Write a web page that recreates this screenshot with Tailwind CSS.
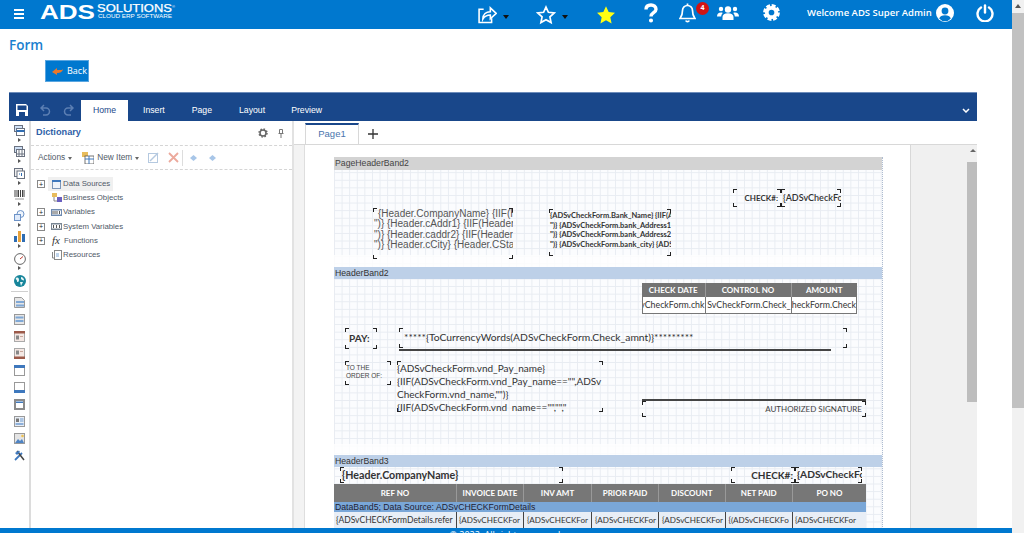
<!DOCTYPE html>
<html lang="en">
<head>
<meta charset="utf-8">
<title>Form</title>
<script src="https://cdn.jsdelivr.net/npm/@tailwindcss/browser@4"></script>
</head>
<body class="bg-white">
<div class="relative flex h-[533px] w-[1024px] overflow-hidden font-['Open_Sans',sans-serif]">
  <div class="flex w-[1012px] flex-col">
    <!-- top bar -->
    <header class="relative flex h-[29px] shrink-0 items-center bg-[#0078cf] text-white">
      <svg class="ml-[14px] h-[11px] w-[11px]" viewBox="0 0 11 11" fill="#fff"><rect y="0" width="10" height="2"/><rect y="4" width="10" height="2"/><rect y="8" width="10" height="2"/></svg>
      <svg class="ml-[15px] mb-[6px] h-[20px] w-[136px]" viewBox="0 0 136 20" fill="#fff">
        <text x="0" y="16.5" font-family="Liberation Sans" font-weight="700" font-size="21" textLength="55" lengthAdjust="spacingAndGlyphs">ADS</text>
        <text x="57" y="10" font-family="Liberation Sans" font-size="11" stroke="#fff" stroke-width=".25" textLength="75" lengthAdjust="spacingAndGlyphs">SOLUTIONS</text>
        <text x="58" y="16" font-family="Liberation Sans" font-size="5.5" textLength="74" lengthAdjust="spacingAndGlyphs">CLOUD ERP SOFTWARE</text>
        <text x="132" y="6" font-family="Liberation Sans" font-size="4">®</text>
      </svg>
      <div class="ml-[301px] flex items-center">
        <svg class="h-[20px] w-[20px]" viewBox="0 0 24 24" fill="none" stroke="#fff" stroke-width="1.9"><path d="M8 5H2.500v16h15v-5"/><path d="M7 17c0-6 4-9 9-9V3.500l7 6.500-7 6.500V12c-4 0-7 1.500-9 5z"/></svg>
        <span class="ml-[6px] mt-[5px] h-0 w-0 border-x-[3px] border-t-[4px] border-x-transparent border-t-[#111]"></span>
        <svg class="ml-[27px] h-[20px] w-[20px]" viewBox="0 0 24 24" fill="none" stroke="#fff" stroke-width="2"><path d="M12 2.500l2.900 6.300 6.900.8-5.100 4.700 1.400 6.800-6.100-3.400-6.100 3.400 1.400-6.800-5.100-4.700 6.900-.8z"/></svg>
        <span class="ml-[6px] mt-[5px] h-0 w-0 border-x-[3px] border-t-[4px] border-x-transparent border-t-[#111]"></span>
        <svg class="ml-[28px] h-[20px] w-[20px]" viewBox="0 0 24 24" fill="#ffff14"><path d="M12 1.500l3.200 7 7.600.9-5.600 5.200 1.500 7.500-6.700-3.800-6.700 3.800 1.500-7.500L1.200 9.400l7.600-.9z"/></svg>
        <svg class="ml-[28px] mb-[4px] h-[20px] w-[14px]" viewBox="0 0 14 20" fill="none" stroke="#fff" stroke-width="3.400"><path d="M2 6.500C2 3.500 4.200 2 7 2s5 1.600 5 4.200c0 3.600-5 3.400-5 7.300"/><circle cx="7" cy="17.500" r="1.300" fill="#fff" stroke-width="1.500"/></svg>
        <svg class="ml-[21px] mb-[4px] h-[20px] w-[17px]" viewBox="0 0 17 20" fill="none" stroke="#fff" stroke-width="1.700"><path d="M8.500 2.500A5 5 0 0 0 3.500 7.500c0 5-1.500 6.500-2.500 8h15c-1-1.500-2.500-3-2.500-8a5 5 0 0 0-5-5z"/><path d="M8.500 .5v2M6.800 17.500a1.800 1.800 0 0 0 3.400 0" /></svg>
        <span class="mb-[13px] flex h-[13px] w-[13px] items-center justify-center rounded-full bg-[#d11414] text-[7px] font-bold">4</span>
        <svg class="ml-[8px] mb-[3px] h-[18px] w-[22px]" viewBox="0 0 22 18" fill="#fff"><circle cx="11" cy="5.500" r="3.200"/><circle cx="4" cy="5" r="2.200"/><circle cx="18" cy="5" r="2.200"/><path d="M5.500 16v-3c0-2.400 2-3.800 5.500-3.800s5.500 1.400 5.500 3.800v3z"/><path d="M0 12.500C0 10 1.500 8.500 4 8.500c.7 0 1.300.1 1.800.4C4.700 10 4.200 11.200 4.200 12.500z"/><path d="M22 12.500C22 10 20.500 8.500 18 8.500c-.7 0-1.300.1-1.800.4 1.100 1.100 1.600 2.300 1.600 3.600z"/></svg>
        <svg class="ml-[24px] mb-[4px] h-[17px] w-[17px]" viewBox="0 0 18 18"><circle cx="9" cy="9" r="5" fill="none" stroke="#fff" stroke-width="4"/><circle cx="9" cy="9" r="7.200" fill="none" stroke="#fff" stroke-width="3.400" stroke-dasharray="4 1.650"/></svg>
      </div>
      <span class="ml-[27px] mb-[3px] w-[127px] whitespace-nowrap text-[9.500px] font-semibold">Welcome ADS Super Admin</span>
      <svg class="ml-[2px] mb-[3px] h-[18px] w-[18px]" viewBox="0 0 18 18"><circle cx="9" cy="9" r="9" fill="#fff"/><circle cx="9" cy="7" r="3.400" fill="#0078cf"/><path d="M3.200 14.500C4 12 6 11.300 9 11.300s5 .7 5.800 3.200A7.500 7.500 0 0 1 3.200 14.500z" fill="#0078cf"/></svg>
      <svg class="ml-[22px] mb-[4px] h-[18px] w-[18px]" viewBox="0 0 18 18" fill="none" stroke="#fff" stroke-width="2.400" stroke-linecap="round"><path d="M5 3.500a7.500 7.500 0 1 0 8 0"/><path d="M9 1.500v7"/></svg>
    </header>

    <!-- page head -->
    <div class="h-[63px] shrink-0 pl-[9px] pt-[8px]">
      <h1 class="text-[13.500px] font-semibold leading-[17px] text-[#1a80cf]">Form</h1>
      <button class="ml-[36px] mt-[6px] flex h-[22px] w-[44px] items-center gap-[4px] border border-[#5aa6e0] bg-[#0078cf] pl-[6px] text-[9px] text-white">
        <svg class="h-[9px] w-[11px]" viewBox="0 0 11 9"><path d="M0 5l5-4v2c3 0 5 .5 6-1-.5 3-3 4-6 4v2z" fill="#e8782a"/></svg>Back
      </button>
    </div>

    <!-- designer -->
    <div class="ml-[9px] flex w-[968px] flex-1 flex-col font-['Liberation_Sans',sans-serif]">
      <div class="flex h-[29px] shrink-0 items-end border-t border-[#6d8cba] bg-[#19478a] text-[8.700px] text-white">
        <div class="flex h-[28px] items-center pl-[7px]">
          <svg class="mt-[5px] h-[12px] w-[12px]" viewBox="0 0 12 12"><path d="M0 0h10l2 2v10H0z" fill="#fff"/><rect x="1.500" y="1.500" width="9" height="4.500" fill="#19478a"/><rect x="3" y="8" width="6" height="4" fill="#19478a"/></svg>
          <svg class="ml-[12px] mt-[5px] h-[12px] w-[11px]" viewBox="0 0 11 12" fill="none" stroke="#5c7fb3" stroke-width="1.500"><path d="M4 1L1 4l3 3M1 4h5a3.500 3.500 0 0 1 0 7H3"/></svg>
          <svg class="ml-[12px] mt-[5px] h-[12px] w-[11px]" viewBox="0 0 11 12" fill="none" stroke="#5c7fb3" stroke-width="1.500"><path d="M7 1l3 3-3 3M10 4H5a3.500 3.500 0 0 0 0 7h3"/></svg>
        </div>
        <div class="ml-[7px] flex h-[21px] w-[47px] items-center justify-center bg-white text-[#19478a]">Home</div>
        <div class="flex h-[21px] items-center">
          <span class="ml-[15px]">Insert</span>
          <span class="ml-[27px]">Page</span>
          <span class="ml-[27px]">Layout</span>
          <span class="ml-[26px]">Preview</span>
        </div>
        <svg class="ml-auto mb-[8px] mr-[7px] h-[5px] w-[8px]" viewBox="0 0 8 5" fill="none" stroke="#fff" stroke-width="1.500"><path d="M1 1l3 3 3-3"/></svg>
      </div>

      <div class="flex min-h-0 flex-1">
        <!-- rail -->
        <div class="flex w-[22px] shrink-0 flex-col items-center border-r-2 border-[#dcdcdc] pl-[1px] pt-[4px]" id="rail">
          <div class="flex h-[21.300px] flex-col items-center"><svg class="h-[11px] w-[11px]" viewBox="0 0 11 11" fill="none" stroke="#6b7280"><rect x=".5" y=".5" width="8" height="6" fill="#cfe0f5"/><rect x="2.500" y="3.500" width="8" height="7" fill="#fff"/><path d="M2.500 6h8" stroke="#2f6db3" stroke-width="2"/></svg><i class="mt-[2px] block h-0 w-0 border-y-[2px] border-l-[3px] border-y-transparent border-l-[#555]"></i></div>
          <div class="flex h-[21.300px] flex-col items-center"><svg class="h-[11px] w-[11px]" viewBox="0 0 11 11" fill="none" stroke="#6b7280"><rect x=".5" y=".5" width="8" height="6" fill="#cfe0f5"/><rect x="2.500" y="3.500" width="8" height="7" fill="#fff"/><path d="M2.500 8h8M5 4v6M8 4v6" /></svg><i class="mt-[2px] block h-0 w-0 border-y-[2px] border-l-[3px] border-y-transparent border-l-[#555]"></i></div>
          <div class="flex h-[21.300px] flex-col items-center"><svg class="h-[11px] w-[11px]" viewBox="0 0 11 11" fill="none" stroke="#6b7280"><rect x=".5" y=".5" width="8" height="8" fill="#eee"/><rect x="3" y="3" width="7.500" height="7.500" fill="#fff"/><path d="M5 6h1M7.500 5v3" stroke="#2f6db3"/></svg><i class="mt-[2px] block h-0 w-0 border-y-[2px] border-l-[3px] border-y-transparent border-l-[#555]"></i></div>
          <div class="flex h-[21.300px] flex-col items-center"><svg class="h-[11px] w-[11px]" viewBox="0 0 11 11" stroke="#444"><path d="M1 1v7M3 1v7M4.500 1v7M6.500 1v7M8.500 1v7M10 1v7"/><path d="M1 10h9" stroke="#999"/></svg><i class="mt-[2px] block h-0 w-0 border-y-[2px] border-l-[3px] border-y-transparent border-l-[#555]"></i></div>
          <div class="flex h-[21.300px] flex-col items-center"><svg class="h-[11px] w-[11px]" viewBox="0 0 11 11" fill="none" stroke="#6d93c8"><circle cx="6.500" cy="4" r="3.500" fill="#eef4fb"/><rect x=".5" y="4.500" width="6" height="6" fill="#dfeafa"/></svg><i class="mt-[2px] block h-0 w-0 border-y-[2px] border-l-[3px] border-y-transparent border-l-[#555]"></i></div>
          <div class="flex h-[21.300px] flex-col items-center"><svg class="h-[11px] w-[11px]" viewBox="0 0 11 11"><rect x="0" y="5" width="3" height="6" fill="#2f6db3"/><rect x="4" y="0" width="3" height="11" fill="#e8a33c"/><rect x="8" y="3" width="3" height="8" fill="#2f6db3"/></svg><i class="mt-[2px] block h-0 w-0 border-y-[2px] border-l-[3px] border-y-transparent border-l-[#555]"></i></div>
          <div class="flex h-[21.300px] flex-col items-center"><svg class="h-[12px] w-[12px]" viewBox="0 0 12 12" fill="#fff" stroke="#666"><circle cx="6" cy="6" r="5.400"/><path d="M6 6l3-2.500" stroke="#c0392b"/></svg><i class="mt-[1px] block h-0 w-0 border-y-[2px] border-l-[3px] border-y-transparent border-l-[#555]"></i></div>
          <svg class="mt-[1px] h-[12px] w-[12px]" viewBox="0 0 12 12"><circle cx="6" cy="6" r="6" fill="#17859b"/><path d="M2 3c2-1 3 0 3 2S3 8 3 6 1 5 2 3zM7 2c2 0 3 2 3 3s-2 0-3-1zM6 7h3l-2 4z" fill="#e8f5f5"/></svg>
          <div class="mb-[5px] mt-[4px] h-px w-[17px] shrink-0 bg-[#cfcfcf]"></div>
          <div class="flex flex-col items-center gap-[6px]">
            <svg class="h-[11px] w-[11px]" viewBox="0 0 11 11"><path d="M.5.500h7l3 3v7H.5z" fill="#e6e6e6" stroke="#999"/><rect x="2" y="4" width="8" height="2" fill="#7fa8d6"/><rect x="2" y="7.500" width="8" height="2" fill="#7fa8d6"/></svg>
            <svg class="h-[11px] w-[11px]" viewBox="0 0 11 11"><rect x=".5" y=".5" width="10" height="10" fill="#e6e6e6" stroke="#999"/><rect x="1.500" y="2.500" width="8" height="2" fill="#7fa8d6"/><rect x="1.500" y="6" width="8" height="2" fill="#7fa8d6"/></svg>
            <svg class="h-[11px] w-[11px]" viewBox="0 0 11 11"><rect x=".5" y=".5" width="10" height="10" fill="#f4e8e4" stroke="#aaa"/><rect x="0" y="0" width="11" height="2.500" fill="#9c5a4a"/><rect x="2" y="4.500" width="3" height="4" fill="#888"/><rect x="6" y="5" width="3" height="1" fill="#c8a79c"/></svg>
            <svg class="h-[11px] w-[11px]" viewBox="0 0 11 11"><rect x=".5" y=".5" width="10" height="10" fill="#f4e8e4" stroke="#aaa"/><rect x="0" y="8.500" width="11" height="2.500" fill="#9c5a4a"/><rect x="2" y="2.500" width="3" height="4" fill="#888"/><rect x="6" y="3" width="3" height="1" fill="#c8a79c"/></svg>
            <svg class="h-[11px] w-[11px]" viewBox="0 0 11 11"><rect x=".5" y=".5" width="10" height="10" fill="#fff" stroke="#999"/><rect x="0" y="0" width="11" height="3" fill="#3e78bd"/></svg>
            <svg class="h-[11px] w-[11px]" viewBox="0 0 11 11"><rect x=".5" y=".5" width="10" height="10" fill="#fff" stroke="#999"/><rect x="0" y="8" width="11" height="3" fill="#3e78bd"/></svg>
            <svg class="h-[11px] w-[11px]" viewBox="0 0 11 11"><rect x="0" y="0" width="11" height="11" fill="#8a8a8a"/><rect x="2" y="2" width="7" height="7" fill="#fff"/><rect x="2" y="2.500" width="7" height="1.500" fill="#3e78bd"/></svg>
            <svg class="h-[11px] w-[11px]" viewBox="0 0 11 11"><rect x=".5" y=".5" width="10" height="10" fill="#e9eef5" stroke="#999"/><rect x="2" y="2.500" width="3" height="3.500" fill="#777"/><path d="M6 3h3.500M6 5h3.500" stroke="#6e9bd0"/><path d="M1.500 8h8" stroke="#6e9bd0" stroke-width="1.500"/></svg>
            <svg class="h-[11px] w-[11px]" viewBox="0 0 11 11"><rect x=".5" y=".5" width="10" height="10" fill="#e4e4e4" stroke="#999"/><path d="M1 10l3-4 2 2 2-2 2 4z" fill="#4f84c4"/><circle cx="8.500" cy="3" r="1.300" fill="#efc14f"/></svg>
            <svg class="h-[11px] w-[11px]" viewBox="0 0 11 11" fill="none"><path d="M1 10l7-7" stroke="#3e78bd" stroke-width="1.800"/><path d="M3 1l7 9" stroke="#444" stroke-width="1.500"/><path d="M1 3l4-2.500 1 1.500-3 3z" fill="#3e78bd"/></svg>
          </div>
        </div>

        <!-- dictionary -->
        <aside class="flex w-[263px] shrink-0 flex-col border-r-2 border-[#e2e2e2] text-[8.300px] text-[#505a68]">
          <div class="flex h-[25px] shrink-0 items-center border-b border-dashed border-[#d5d5d5] pl-[5px] pr-[8px]">
            <span class="text-[9.200px] font-bold text-[#2f5fa8]">Dictionary</span>
            <svg class="ml-auto h-[10px] w-[10px]" viewBox="0 0 10 10"><circle cx="5" cy="5" r="3" fill="none" stroke="#666" stroke-width="1.500"/><circle cx="5" cy="5" r="4" fill="none" stroke="#666" stroke-width="1.500" stroke-dasharray="1.500 1.650"/></svg>
            <svg class="ml-[10px] h-[9px] w-[6px]" viewBox="0 0 6 9" fill="none" stroke="#777"><path d="M1.500.5h3v4h-3zM.5 4.500h5M3 5v4"/></svg>
          </div>
          <div class="flex h-[24px] shrink-0 items-center border-b border-dashed border-[#d5d5d5] pl-[7px]">
            <span>Actions</span><i class="ml-[3px] mt-px h-0 w-0 border-x-[2.500px] border-t-[3px] border-x-transparent border-t-[#666]"></i>
            <svg class="ml-[10px] h-[12px] w-[12px]" viewBox="0 0 12 12"><rect x="0" y="0" width="6" height="5" fill="#e8bc5c"/><rect x="3" y="4" width="9" height="8" fill="#fff" stroke="#555" stroke-width=".8"/><path d="M3 7h9M7 4v8" stroke="#3e78bd"/></svg>
            <span class="ml-[3px]">New Item</span><i class="ml-[3px] mt-px h-0 w-0 border-x-[2.500px] border-t-[3px] border-x-transparent border-t-[#666]"></i>
            <svg class="ml-[9px] h-[11px] w-[11px]" viewBox="0 0 11 11" fill="none" stroke="#b5c9e0"><rect x=".5" y="1.500" width="9" height="9"/><path d="M2 9l8-8" stroke-width="1.500"/></svg>
            <svg class="ml-[9px] h-[11px] w-[11px]" viewBox="0 0 11 11" fill="none" stroke="#eca99c" stroke-width="1.800"><path d="M1 1l9 9M10 1L1 10"/></svg>
            <div class="ml-[3px] h-[16px] w-px bg-[#ddd]"></div>
            <svg class="ml-[6px] h-[8px] w-[9px]" viewBox="0 0 9 8" fill="#a8c6e8"><path d="M4.500 1L8 4 4.500 7 1 4z"/></svg>
            <svg class="ml-[10px] h-[8px] w-[9px]" viewBox="0 0 9 8" fill="#a8c6e8"><path d="M4.500 1L8 4 4.500 7 1 4z"/></svg>
          </div>
          <ul class="whitespace-nowrap pl-[6px] pt-[7px] text-[7.800px] leading-[14.200px]">
            <li class="flex h-[14.200px] items-center"><i class="flex h-[8px] w-[8px] items-center justify-center border border-[#888] text-[7px] not-italic leading-none text-[#222]">+</i><span class="ml-[3px] flex h-[14.200px] w-[65px] items-center bg-[#f0f0f0] pl-[4px]"><svg class="h-[9px] w-[9px]" viewBox="0 0 9 9"><rect x=".5" y=".5" width="8" height="8" fill="#eef3fa" stroke="#7b95b8"/><rect width="9" height="2" fill="#3e78bd"/></svg><span class="ml-[2px]">Data Sources</span></span></li>
            <li class="flex h-[14.200px] items-center pl-[15px]"><svg class="h-[10px] w-[10px]" viewBox="0 0 10 10"><rect width="5" height="4" fill="#e8bc5c"/><rect x="5" y="4" width="5" height="5" fill="#6a5fc0"/><path d="M2 4v4h3" fill="none" stroke="#888"/></svg><span class="ml-[1px]">Business Objects</span></li>
            <li class="flex h-[14.200px] items-center"><i class="flex h-[8px] w-[8px] items-center justify-center border border-[#888] text-[7px] not-italic leading-none text-[#222]">+</i><svg class="ml-[6px] h-[7px] w-[11px]" viewBox="0 0 11 7"><rect width="11" height="7" fill="#6f8bb0"/><rect x="1" y="1.500" width="9" height="4" fill="#fff"/><path d="M2 2v3M4 2v3M6 2v3M8.500 2v3" stroke="#555"/></svg><span class="ml-[1px]">Variables</span></li>
            <li class="flex h-[14.200px] items-center"><i class="flex h-[8px] w-[8px] items-center justify-center border border-[#888] text-[7px] not-italic leading-none text-[#222]">+</i><svg class="ml-[6px] h-[7px] w-[11px]" viewBox="0 0 11 7"><rect width="11" height="7" fill="#7a8794"/><rect x="1" y="1.500" width="9" height="4" fill="#fff"/><path d="M2.500 2v3M5.500 2v3M8.500 2v3" stroke="#555"/></svg><span class="ml-[1px]">System Variables</span></li>
            <li class="flex h-[14.200px] items-center"><i class="flex h-[8px] w-[8px] items-center justify-center border border-[#888] text-[7px] not-italic leading-none text-[#222]">+</i><span class="ml-[7px] w-[11px] font-['Liberation_Serif',serif] text-[11px] italic leading-none text-[#333]">fx</span><span class="ml-px">Functions</span></li>
            <li class="flex h-[14.200px] items-center pl-[15px]"><svg class="h-[10px] w-[10px]" viewBox="0 0 10 10" fill="none" stroke="#888"><rect x="2.500" y=".5" width="7" height="9" fill="#fff"/><path d="M.5 2v6h2"/><path d="M4 4h3M4 6h3" stroke="#7fa8d6"/></svg><span class="ml-[1px]">Resources</span></li>
          </ul>
        </aside>

        <!-- design surface -->
        <div class="flex min-w-0 flex-1 flex-col">
          <div class="flex h-[24px] shrink-0 items-end border-b border-[#d8d8d8] pl-[11px]">
            <div class="mb-[-1px] flex h-[22px] w-[54px] items-center justify-center border-x border-b border-t-2 border-[#d8d8d8] border-t-[#19478a] bg-white text-[9.500px] text-[#4a74ad]">Page1</div>
            <svg class="mb-[5px] ml-[9px] h-[10px] w-[10px]" viewBox="0 0 10 10" stroke="#333" stroke-width="1.300"><path d="M5 0v10M0 5h10"/></svg>
          </div>
          <div class="flex min-h-0 flex-1">
            <div class="w-[11px] shrink-0 border-r border-[#dedede] bg-[#f3f3f3]"></div>
            <div class="relative w-[605px] shrink-0 overflow-hidden bg-white">
              <!-- report page -->
              <div class="absolute left-[29px] top-[12px] h-[420px] w-[549px] border-r border-dotted border-[#aebcd0] bg-[#fbfcfe] bg-[linear-gradient(#e8ecf2_1px,transparent_1px),linear-gradient(90deg,#e8ecf2_1px,transparent_1px)] bg-size-[7.6px_7.6px] text-[#333]">
                <div class="absolute inset-x-0 top-0 h-[13px] bg-[#d3d3d3] pl-[1px] text-[8.700px] leading-[13px] text-[#444]">PageHeaderBand2</div>
                <div class="absolute inset-x-0 top-[98px] h-[12px] bg-white/80"></div>
                <div class="absolute inset-x-0 top-[110px] h-[12px] bg-[#bdd0e8] pl-[1px] text-[8.700px] leading-[12px] text-[#333]">HeaderBand2</div>
                <div class="absolute inset-x-0 top-[287px] h-[11px] bg-white/80"></div>
                <div class="absolute inset-x-0 top-[298px] h-[12px] bg-[#bdd0e8] pl-[1px] text-[8.700px] leading-[12px] text-[#333]">HeaderBand3</div>

                <div data-c class="absolute left-[39px] top-[51px] h-[51px] w-[140px] overflow-hidden whitespace-nowrap pl-[1px] pt-[1px] text-[10px] leading-[10.300px] text-[#555]"><span class="pl-[4px]">{Header.CompanyName} {IIF(Header</span><br>")} {Header.cAddr1} {IIF(Header.cAddr2<br>")} {Header.caddr2} {IIF(Header.cCity<br>")} {Header.cCity} {Header.CState</div>
                <div data-c class="absolute left-[215px] top-[52px] h-[47px] w-[122px] overflow-hidden whitespace-nowrap pl-[1px] pt-[2px] font-['Lato',sans-serif] text-[7.500px] font-bold leading-[9.500px]">{ADSvCheckForm.Bank_Name} {IIF(ADSv<br>")} {ADSvCheckForm.bank_Address1} {IIF<br>")} {ADSvCheckForm.bank_Address2} {IIF<br>")} {ADSvCheckForm.bank_city} {ADSvCheck</div>
                <div data-c class="absolute left-[399px] top-[32px] flex h-[18px] w-[48px] items-center justify-end pr-[3px] font-['Lato',sans-serif] text-[8px] font-bold">CHECK#:</div>
                <div data-c class="absolute left-[447px] top-[32px] flex h-[18px] w-[60px] items-center overflow-hidden whitespace-nowrap pl-[2px] font-['Lato',sans-serif] text-[9px] font-semibold">{ADSvCheckForm</div>

                <!-- check table -->
                <div class="absolute left-[308px] top-[126px] grid w-[215px] grid-cols-[63.500px_86px_65.500px] font-['Lato',sans-serif]">
                  <div class="flex h-[14px] items-center justify-center border-r border-[#999] bg-[#737373] text-[8px] font-bold text-white">CHECK DATE</div>
                  <div class="flex h-[14px] items-center justify-center border-r border-[#999] bg-[#737373] text-[8px] font-bold text-white">CONTROL NO</div>
                  <div class="flex h-[14px] items-center justify-center bg-[#737373] text-[8px] font-bold text-white">AMOUNT</div>
                  <div class="flex h-[17px] items-center justify-end overflow-hidden whitespace-nowrap border-x border-b border-[#777] bg-white text-[8.800px]">vCheckForm.chk</div>
                  <div class="flex h-[17px] items-center justify-end overflow-hidden whitespace-nowrap border-r border-b border-[#777] bg-white text-[8.800px]">SvCheckForm.Check_</div>
                  <div class="flex h-[17px] items-center justify-end overflow-hidden whitespace-nowrap border-r border-b border-[#777] bg-white text-[8.800px]">heckForm.Check</div>
                </div>

                <div data-c class="absolute left-[11px] top-[171px] flex h-[21px] w-[32px] items-center pl-[4px] font-['Lato',sans-serif] text-[10px] font-bold">PAY:</div>
                <div data-c class="absolute left-[65px] top-[171px] flex h-[20px] w-[448px] items-center whitespace-nowrap pl-[5px] font-['Lato',sans-serif] text-[10.300px]">*****{ToCurrencyWords(ADSvCheckForm.Check_amnt)}*********</div>
                <div class="absolute left-[65px] top-[192px] h-[2px] w-[432px] bg-[#444]"></div>
                <div data-c class="absolute left-[11px] top-[204px] h-[24px] w-[46px] pl-[1px] pt-[3px] font-['Liberation_Sans',sans-serif] text-[6.500px] leading-[8px] text-[#444]">TO THE<br>ORDER OF:</div>
                <div data-c class="absolute left-[63px] top-[204px] h-[51px] w-[206px] overflow-hidden pt-[0.500px] font-['Lato',sans-serif] text-[10px] leading-[13px]">{ADSvCheckForm.vnd_Pay_name}<br>{IIF(ADSvCheckForm.vnd_Pay_name=="",ADSv<br>CheckForm.vnd_name,"")}<br>{IIF(ADSvCheckForm.vnd_name=="","","</div>
                <div data-c class="absolute left-[308px] top-[242px] flex h-[18px] w-[224px] items-center justify-end border-t-2 border-[#444] pr-[4px] font-['Lato',sans-serif] text-[8px] text-[#444]">AUTHORIZED SIGNATURE</div>

                <div data-c class="absolute left-[6px] top-[310px] flex h-[16px] w-[223px] items-center pl-[2px] font-['Lato',sans-serif] text-[10.700px] font-bold">{Header.CompanyName}</div>
                <div data-c class="absolute left-[397px] top-[310px] flex h-[16px] w-[64px] items-center justify-end pr-[2px] font-['Lato',sans-serif] text-[10px] font-bold">CHECK#:</div>
                <div data-c class="absolute left-[461px] top-[310px] flex h-[16px] w-[67px] items-center overflow-hidden whitespace-nowrap pl-[2px] font-['Lato',sans-serif] text-[10.200px] font-bold">{ADSvCheckForm</div>

                <!-- detail table -->
                <div class="absolute left-0 top-[327px] grid w-[532px] grid-cols-[123px_67px_68px_67px_66.500px_67.500px_73px] font-['Lato',sans-serif] text-white">
                  <div class="flex h-[18px] items-center justify-center border-r border-[#999] bg-[#777] text-[8px] font-bold">REF NO</div>
                  <div class="flex h-[18px] items-center justify-center border-r border-[#999] bg-[#777] text-[8px] font-bold">INVOICE DATE</div>
                  <div class="flex h-[18px] items-center justify-center border-r border-[#999] bg-[#777] text-[8px] font-bold">INV AMT</div>
                  <div class="flex h-[18px] items-center justify-center border-r border-[#999] bg-[#777] text-[8px] font-bold">PRIOR PAID</div>
                  <div class="flex h-[18px] items-center justify-center border-r border-[#999] bg-[#777] text-[8px] font-bold">DISCOUNT</div>
                  <div class="flex h-[18px] items-center justify-center border-r border-[#999] bg-[#777] text-[8px] font-bold">NET PAID</div>
                  <div class="flex h-[18px] items-center justify-center bg-[#777] text-[8px] font-bold">PO NO</div>
                  <div class="col-span-7 h-[10px] bg-[#7aa7d8] pl-[1px] font-['Liberation_Sans',sans-serif] text-[8.700px] leading-[10px] text-[#223]">DataBand5; Data Source: ADSvCHECKFormDetails</div>
                  <div class="flex h-[16px] items-center overflow-hidden whitespace-nowrap border-r border-[#444] bg-[#e8eef6] pl-[2px] text-[8.500px] text-[#333]">{ADSvCHECKFormDetails.refer</div>
                  <div class="flex h-[16px] items-center overflow-hidden whitespace-nowrap border-r border-[#444] bg-[#e8eef6] pl-[2px] text-[8.100px] text-[#333]">{ADSvCHECKFor</div>
                  <div class="flex h-[16px] items-center overflow-hidden whitespace-nowrap border-r border-[#444] bg-[#e8eef6] pl-[3px] text-[8.100px] text-[#333]">{ADSvCHECKFor</div>
                  <div class="flex h-[16px] items-center overflow-hidden whitespace-nowrap border-r border-[#444] bg-[#e8eef6] pl-[3px] text-[8.100px] text-[#333]">{ADSvCHECKFor</div>
                  <div class="flex h-[16px] items-center overflow-hidden whitespace-nowrap border-r border-[#444] bg-[#e8eef6] pl-[3px] text-[8.100px] text-[#333]">{ADSvCHECKFor</div>
                  <div class="flex h-[16px] items-center overflow-hidden whitespace-nowrap border-r border-[#444] bg-[#e8eef6] pl-[3px] text-[8.100px] text-[#333]">{(ADSvCHECKFo</div>
                  <div class="flex h-[16px] items-center overflow-hidden whitespace-nowrap bg-[#e8eef6] pl-[2px] text-[8.100px] text-[#333]">{ADSvCHECKFor</div>
                </div>
              </div>
            </div>
            <div class="w-[57px] shrink-0 border-l border-[#d8d8d8] bg-[#f0f0f0]"></div>
            <div class="relative w-[10px] shrink-0 bg-[#f0f0f0]">
              <i class="absolute left-[3px] top-[4px] h-0 w-0 border-x-[3px] border-b-[3px] border-x-transparent border-b-[#666]"></i>
              <div class="absolute inset-x-0 top-[17px] h-[240px] bg-[#bdbdbd]"></div>
            </div>
          </div>
        </div>
      </div>
    </div>
  </div>

  <!-- window scrollbar -->
  <div class="relative w-[12px] shrink-0 bg-[#f1f1f1]">
    <i class="absolute left-[3px] top-[4px] h-0 w-0 border-x-[3px] border-b-[4px] border-x-transparent border-b-[#555]"></i>
    <div class="absolute inset-x-0 top-[13px] h-[395px] bg-[#c1c1c1]"></div>
  </div>

  <!-- fixed footer -->
  <footer class="absolute bottom-0 left-0 h-[5px] w-[1012px] overflow-hidden bg-[#0078cf] text-center text-[9px] leading-[14px] text-white">© 2022. All rights reserved.</footer>
</div>
<script>
document.querySelectorAll('[data-c]').forEach(function (el) {
  ['absolute left-0 top-0 h-[4px] w-[4px] border-l border-t border-[#222]',
   'absolute right-0 top-0 h-[4px] w-[4px] border-r border-t border-[#222]',
   'absolute left-0 bottom-0 h-[4px] w-[4px] border-l border-b border-[#222]',
   'absolute right-0 bottom-0 h-[4px] w-[4px] border-r border-b border-[#222]'].forEach(function (c) {
    var s = document.createElement('span'); s.className = c; el.appendChild(s);
  });
});
</script>
</body>
</html>
